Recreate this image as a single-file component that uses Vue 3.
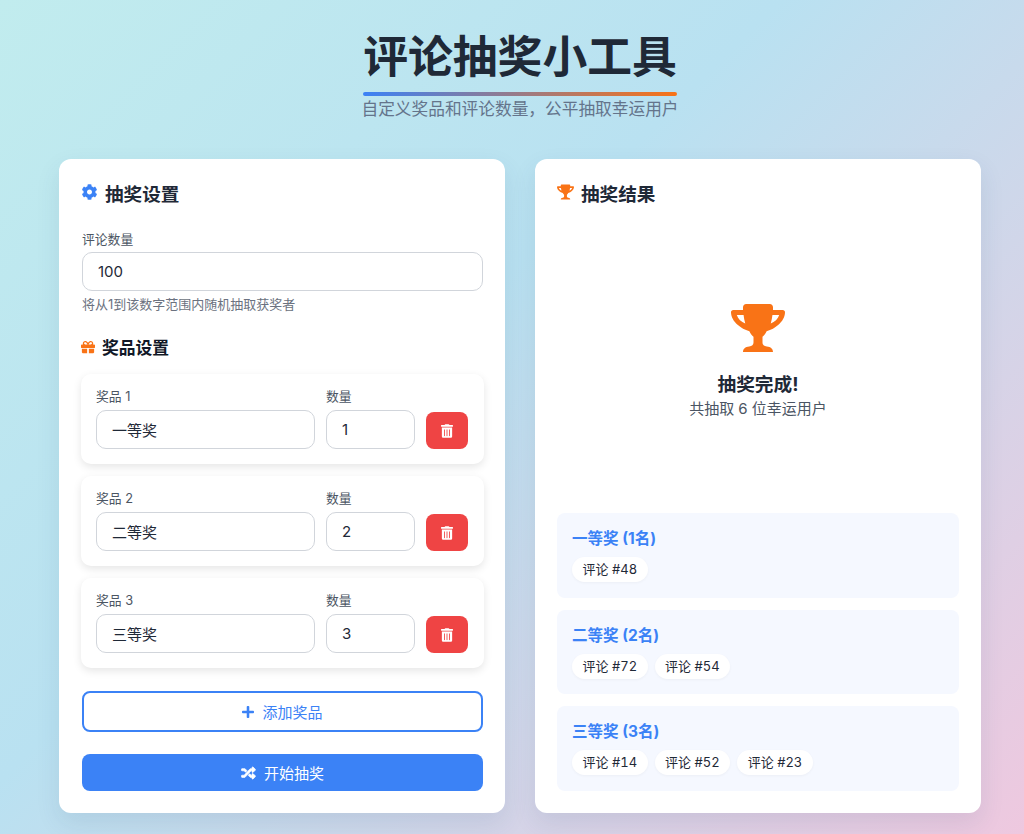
<template>
  <div class="page">
    <header class="page-header">
      <h1>评论抽奖小工具</h1>
      <p>自定义奖品和评论数量&#xFF0C;公平抽取幸运用户</p>
    </header>

    <main class="columns">
      <section class="card">
        <h2 class="card-title">
          <svg class="icon blue" viewBox="0 0 512 512"><path :d="icons.cog" /></svg>
          抽奖设置
        </h2>
        <div class="form-group">
          <label for="comment-count">评论数量</label>
          <input id="comment-count" v-model="commentCount" type="number">
          <small>将从1到该数字范围内随机抽取获奖者</small>
        </div>

        <h3 class="sub-title">
          <svg class="icon-sm orange" viewBox="0 0 512 512"><path :d="icons.gift" /></svg>
          奖品设置
        </h3>
        <div class="prize-list">
          <div v-for="(prize, index) in prizes" :key="index" class="prize-item">
            <div class="prize-name">
              <label>奖品 {{ index + 1 }}</label>
              <input v-model="prize.name" type="text">
            </div>
            <div class="prize-count">
              <label>数量</label>
              <input v-model="prize.count" type="number">
            </div>
            <button class="delete-button" type="button" aria-label="删除">
              <svg viewBox="0 0 448 512"><path :d="icons.trash" /></svg>
            </button>
          </div>
        </div>

        <button class="button-add" type="button">
          <svg viewBox="0 0 448 512"><path :d="icons.plus" /></svg>
          添加奖品
        </button>
        <button class="button-start" type="button">
          <svg viewBox="0 0 512 512"><path :d="icons.random" /></svg>
          开始抽奖
        </button>
      </section>

      <section class="card">
        <h2 class="card-title">
          <svg class="icon orange" viewBox="0 0 576 512"><path :d="icons.trophy" fill-rule="evenodd" /></svg>
          抽奖结果
        </h2>
        <div class="summary">
          <svg class="summary-icon orange" viewBox="0 0 576 512"><path :d="icons.trophy" fill-rule="evenodd" /></svg>
          <h3>抽奖完成!</h3>
          <p>共抽取 6 位幸运用户</p>
        </div>
        <div class="result-list">
          <div v-for="result in results" :key="result.name" class="result-group">
            <h4>{{ result.name }} ({{ result.winners.length }}名)</h4>
            <div class="chips">
              <span v-for="winner in result.winners" :key="winner" class="chip">评论 #{{ winner }}</span>
            </div>
          </div>
        </div>
      </section>
    </main>
  </div>
</template>

<script setup>
import { ref } from 'vue';

const commentCount = ref(100);

const prizes = ref([
  { name: '一等奖', count: 1 },
  { name: '二等奖', count: 2 },
  { name: '三等奖', count: 3 },
]);

const results = [
  { name: '一等奖', winners: [48] },
  { name: '二等奖', winners: [72, 54] },
  { name: '三等奖', winners: [14, 52, 23] },
];

const icons = {
  cog: 'M487.4 315.7l-42.6-24.6c4.3-23.2 4.3-47 0-70.2l42.6-24.6c4.9-2.8 7.1-8.6 5.5-14-11.1-35.6-30-67.8-54.7-94.6-3.8-4.1-10-5.1-14.8-2.3L380.8 110c-17.9-15.4-38.5-27.3-60.8-35.1V25.8c0-5.6-3.9-10.5-9.4-11.7-36.7-8.2-74.3-7.8-109.2 0-5.5 1.2-9.4 6.1-9.4 11.7V75c-22.2 7.9-42.8 19.8-60.8 35.1L88.7 85.5c-4.9-2.8-11-1.9-14.8 2.3-24.7 26.7-43.6 58.9-54.7 94.6-1.7 5.4.6 11.2 5.5 14L67.3 221c-4.3 23.2-4.3 47 0 70.2l-42.6 24.6c-4.9 2.8-7.1 8.6-5.5 14 11.1 35.6 30 67.8 54.7 94.6 3.8 4.1 10 5.1 14.8 2.3l42.6-24.6c17.9 15.4 38.5 27.3 60.8 35.1v49.2c0 5.6 3.9 10.5 9.4 11.7 36.7 8.2 74.3 7.8 109.2 0 5.5-1.2 9.4-6.1 9.4-11.7v-49.2c22.2-7.9 42.8-19.8 60.8-35.1l42.6 24.6c4.9 2.8 11 1.9 14.8-2.3 24.7-26.7 43.6-58.9 54.7-94.6 1.5-5.5-.7-11.3-5.6-14.1zM256 336c-44.1 0-80-35.9-80-80s35.9-80 80-80 80 35.9 80 80-35.9 80-80 80z',
  gift: 'M32 448c0 17.7 14.3 32 32 32h160V320H32v128zm256 32h160c17.7 0 32-14.3 32-32V320H288v160zm192-320h-42.1c6.2-12.1 10.1-25.5 10.1-40 0-48.5-39.5-88-88-88-41.6 0-68.5 21.3-103 68.3-34.5-47-61.4-68.3-103-68.3-48.5 0-88 39.5-88 88 0 14.5 3.8 27.9 10.1 40H32c-17.7 0-32 14.3-32 32v80c0 8.8 7.2 16 16 16h480c8.8 0 16-7.2 16-16v-80c0-17.7-14.3-32-32-32zm-326.1 0c-22.1 0-40-17.9-40-40s17.9-40 40-40c19.9 0 34.6 3.3 86.1 80h-86.1zm206.1 0h-86.1c51.4-76.5 65.7-80 86.1-80 22.1 0 40 17.9 40 40s-17.9 40-40 40z',
  trash: 'M32 464a48 48 0 0 0 48 48h288a48 48 0 0 0 48-48V128H32zm272-256a16 16 0 0 1 32 0v224a16 16 0 0 1-32 0zm-96 0a16 16 0 0 1 32 0v224a16 16 0 0 1-32 0zm-96 0a16 16 0 0 1 32 0v224a16 16 0 0 1-32 0zM432 32H312l-9.4-18.7A24 24 0 0 0 281.1 0H166.8a23.72 23.72 0 0 0-21.4 13.3L136 32H16A16 16 0 0 0 0 48v32a16 16 0 0 0 16 16h416a16 16 0 0 0 16-16V48a16 16 0 0 0-16-16z',
  plus: 'M416 208H272V64c0-17.67-14.33-32-32-32h-32c-17.67 0-32 14.33-32 32v144H32c-17.67 0-32 14.33-32 32v32c0 17.67 14.33 32 32 32h144v144c0 17.67 14.33 32 32 32h32c17.67 0 32-14.33 32-32V304h144c17.67 0 32-14.33 32-32v-32c0-17.67-14.33-32-32-32z',
  random: 'M504.971 359.029c9.373 9.373 9.373 24.569 0 33.941l-80 79.984c-15.01 15.01-40.971 4.49-40.971-16.971V416h-58.785a12.004 12.004 0 0 1-8.773-3.812l-70.556-75.596 53.333-57.143L352 336h32v-39.981c0-21.438 25.943-31.998 40.971-16.971l80 79.981zM12 176h84l52.781 56.551 53.333-57.143-70.556-75.596A11.999 11.999 0 0 0 122.785 96H12c-6.627 0-12 5.373-12 12v56c0 6.627 5.373 12 12 12zm372 0v39.984c0 21.46 25.961 31.98 40.971 16.971l80-79.984c9.373-9.373 9.373-24.569 0-33.941l-80-79.981C409.943 24.021 384 34.582 384 56.019V96h-58.785a12.004 12.004 0 0 0-8.773 3.812L96 336H12c-6.627 0-12 5.373-12 12v56c0 6.627 5.373 12 12 12h110.785c3.326 0 6.503-1.381 8.773-3.812L352 176h32z',
  trophy: 'M162 0H414C434 0 448 14 448 34V64H552C566 64 576 74 576 88C576 140 546 186 506 222C470 254 428 278 380 290C368 316 352 336 336 350V410C336 436 352 448 382 452C424 458 448 474 448 512H128C128 474 152 458 194 452C224 448 240 436 240 410V350C224 336 208 316 196 290C148 278 106 254 70 222C30 186 0 140 0 88C0 74 10 64 24 64H128V34C128 14 142 0 162 0ZM62 118H134C137 150 144 180 152 208C110 192 74 160 62 118ZM514 118H442C439 150 432 180 424 208C466 192 502 160 514 118Z',
};
</script>

<style>
html, body {
  margin: 0;
}
</style>

<style scoped>
.page {
  box-sizing: border-box;
  width: 1024px;
  height: 834px;
  overflow: hidden;
  padding: 26px 43px 21px 59px;
  background: linear-gradient(135deg, #c1ecee 0%, #b9e1f1 42%, #eec8df 100%);
  font-family: Inter, "Noto Sans CJK SC", sans-serif;
  color: #1f2937;
}
.page-header {
  text-align: center;
  height: 133px;
}
.page-header h1 {
  position: relative;
  display: inline-block;
  margin: 0;
  font-size: 44.8px;
  line-height: 62px;
  font-weight: 700;
  color: #1f2937;
}
.page-header h1::after {
  content: '';
  position: absolute;
  left: 0;
  right: 0;
  bottom: -8px;
  height: 4px;
  border-radius: 2px;
  background: linear-gradient(90deg, #3b82f6, #f97316);
}
.page-header p {
  margin: 8px 0 0;
  font-size: 16.7px;
  line-height: 26px;
  color: #64748b;
}
.columns {
  display: grid;
  grid-template-columns: 446px 446px;
  gap: 30px;
}
.card {
  box-sizing: border-box;
  height: 654px;
  padding: 22px;
  background: #fff;
  border-radius: 12px;
  box-shadow: 0 10px 25px rgba(30, 64, 110, 0.1);
  display: flex;
  flex-direction: column;
}
.card-title {
  display: flex;
  align-items: center;
  gap: 7px;
  margin: 0;
  height: 22px;
  font-size: 18.6px;
  font-weight: 700;
  color: #1f2937;
}
.icon {
  width: 17px;
  height: 16px;
  fill: currentColor;
}
.icon-sm {
  width: 14px;
  height: 14px;
  fill: currentColor;
}
.blue {
  color: #3b82f6;
}
.orange {
  color: #f97316;
}
.form-group {
  margin-top: 28px;
  padding: 0 0 0 1px;
}
label {
  display: block;
  font-size: 12.8px;
  line-height: 18px;
  color: #4b5563;
  margin-bottom: 3px;
}
input {
  box-sizing: border-box;
  display: block;
  width: 100%;
  height: 39px;
  padding: 0 15px;
  border: 1px solid #d1d5db;
  border-radius: 10px;
  background: #fff;
  font-family: inherit;
  font-size: 15px;
  color: #1f2937;
  appearance: textfield;
  -moz-appearance: textfield;
}
input::-webkit-inner-spin-button,
input::-webkit-outer-spin-button {
  -webkit-appearance: none;
  margin: 0;
}
small {
  display: block;
  margin-top: 4px;
  font-size: 13px;
  line-height: 18px;
  color: #6b7280;
}
.sub-title {
  display: flex;
  align-items: center;
  gap: 7px;
  margin: 21px 0 0;
  height: 26px;
  font-size: 16.8px;
  font-weight: 700;
  color: #111827;
}
.prize-list {
  display: flex;
  flex-direction: column;
  gap: 12px;
  margin-top: 14px;
}
.prize-item {
  box-sizing: border-box;
  height: 90px;
  margin-right: -1px;
  padding: 11px 16px 15px 15px;
  border-radius: 10px;
  background: #fff;
  box-shadow: 0 3px 8px rgba(0, 0, 0, 0.1);
  display: flex;
  align-items: flex-end;
  gap: 11px;
}
.prize-item label {
  margin-bottom: 4px;
}
.prize-name {
  flex: 1;
}
.prize-count {
  width: 89px;
}
.delete-button {
  width: 42px;
  height: 37px;
  border: none;
  border-radius: 8px;
  background: #ef4444;
  display: flex;
  align-items: center;
  justify-content: center;
  padding: 0;
}
.delete-button svg {
  width: 12px;
  height: 14px;
  fill: #fff;
}
.button-add,
.button-start {
  box-sizing: border-box;
  width: 401px;
  margin-left: 1px;
  display: flex;
  align-items: center;
  justify-content: center;
  gap: 8px;
  font-family: inherit;
  font-size: 15px;
  border-radius: 8px;
}
.button-add {
  height: 41px;
  margin-top: 23px;
  border: 2px solid #3b82f6;
  background: #fff;
  color: #3b82f6;
}
.button-add svg {
  width: 12px;
  height: 14px;
  fill: currentColor;
}
.button-start {
  height: 37px;
  margin-top: 22px;
  border: none;
  background: #3b82f6;
  color: #fff;
}
.button-start svg {
  width: 15px;
  height: 14px;
  fill: currentColor;
  stroke: currentColor;
  stroke-width: 24;
}
.summary {
  height: 310px;
  box-sizing: border-box;
  padding-top: 101px;
  text-align: center;
}
.summary-icon {
  display: block;
  width: 54px;
  height: 48px;
  margin: 0 auto;
  fill: currentColor;
}
.summary h3 {
  margin: 20px 0 0;
  font-size: 18.7px;
  line-height: 26px;
  font-weight: 700;
  color: #1f2937;
}
.summary p {
  margin: 0;
  font-size: 15px;
  line-height: 22px;
  color: #4b5563;
}
.result-list {
  display: flex;
  flex-direction: column;
  gap: 12px;
}
.result-group {
  box-sizing: border-box;
  height: 84.5px;
  padding: 14px 15px;
  border-radius: 8px;
  background: #f5f8ff;
}
.result-group h4 {
  margin: 0;
  font-size: 15.5px;
  line-height: 24px;
  font-weight: 700;
  color: #3b82f6;
}
.chips {
  display: flex;
  gap: 7px;
  margin-top: 6px;
}
.chip {
  height: 25px;
  padding: 0 10.5px;
  border-radius: 13px;
  background: #fff;
  font-size: 13px;
  font-variant-numeric: tabular-nums;
  line-height: 25px;
  color: #1f2937;
  box-shadow: 0 1px 3px rgba(0, 0, 0, 0.04);
}
</style>
